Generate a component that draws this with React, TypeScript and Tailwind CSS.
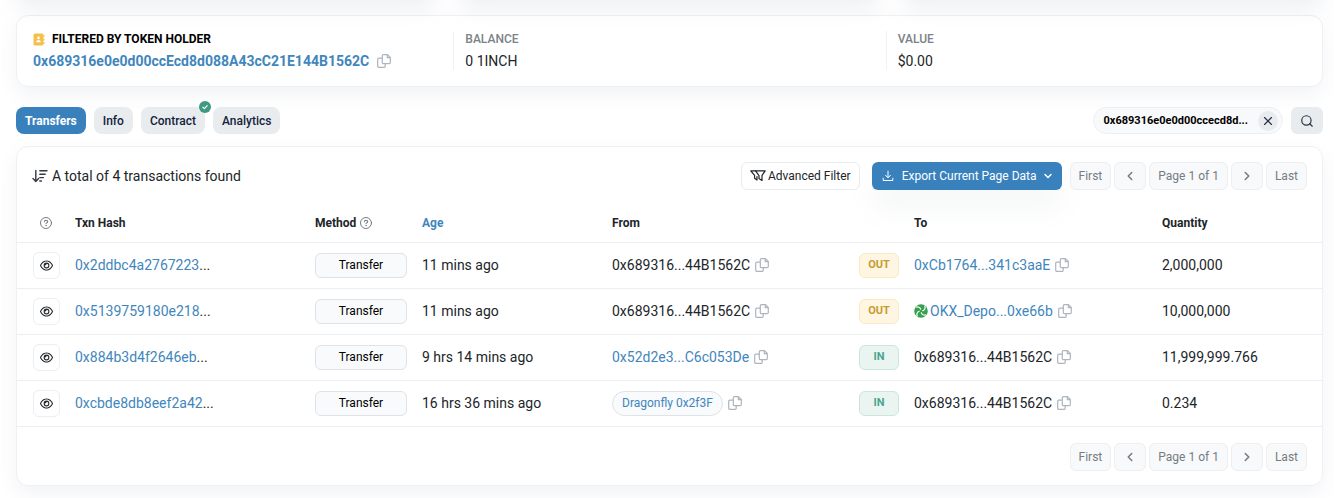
import type { ReactNode } from 'react';
import { clsx } from 'clsx';
import { ChevronDown, ChevronLeft, ChevronRight, Search, X } from 'lucide-react';
import { FaRegEye } from 'react-icons/fa6';

type Address = {
  label: string;
  link?: boolean;
  pill?: boolean;
  exchange?: boolean;
};

type Transfer = {
  hash: string;
  method: string;
  age: string;
  from: Address;
  direction: 'IN' | 'OUT';
  to: Address;
  quantity: string;
};

const HOLDER: Address = { label: '0x689316...44B1562C' };

const transfers: Transfer[] = [
  {
    hash: '0x2ddbc4a2767223',
    method: 'Transfer',
    age: '11 mins ago',
    from: HOLDER,
    direction: 'OUT',
    to: { label: '0xCb1764...341c3aaE', link: true },
    quantity: '2,000,000',
  },
  {
    hash: '0x5139759180e218',
    method: 'Transfer',
    age: '11 mins ago',
    from: HOLDER,
    direction: 'OUT',
    to: { label: 'OKX_Depo...0xe66b', link: true, exchange: true },
    quantity: '10,000,000',
  },
  {
    hash: '0x884b3d4f2646eb',
    method: 'Transfer',
    age: '9 hrs 14 mins ago',
    from: { label: '0x52d2e3...C6c053De', link: true },
    direction: 'IN',
    to: HOLDER,
    quantity: '11,999,999.766',
  },
  {
    hash: '0xcbde8db8eef2a42',
    method: 'Transfer',
    age: '16 hrs 36 mins ago',
    from: { label: 'Dragonfly 0x2f3F', link: true, pill: true },
    direction: 'IN',
    to: HOLDER,
    quantity: '0.234',
  },
];

const tabs = ['Transfers', 'Info', 'Contract', 'Analytics'];

function CopyIcon() {
  return (
    <svg viewBox="0 0 14 14" className="size-3.5" fill="none" stroke="#adb5bd" strokeWidth="1.2" strokeLinejoin="round">
      <path d="M6.4.7h4.1l2.8 2.8v5a1.1 1.1 0 0 1-1.1 1.1H6.4a1.1 1.1 0 0 1-1.1-1.1V1.8A1.1 1.1 0 0 1 6.4.7Z" />
      <path d="M10.3.9v2.8h2.8" />
      <path d="M5.2 4.2H1.8A1.1 1.1 0 0 0 .7 5.3v6.9a1.1 1.1 0 0 0 1.1 1.1h5.3a1.1 1.1 0 0 0 1.1-1.1V9.7" />
    </svg>
  );
}

function CopyButton() {
  return (
    <button type="button" aria-label="Copy address" className="shrink-0">
      <CopyIcon />
    </button>
  );
}

function HelpIcon() {
  return (
    <svg viewBox="0 0 14 14" className="size-3 shrink-0" fill="none" stroke="#6c757d" strokeLinecap="round">
      <circle cx="7" cy="7" r="6.4" strokeWidth="1.1" />
      <path d="M5.2 5.5c0-1 .7-1.6 1.8-1.6s1.9.6 1.9 1.6c0 1.3-1.9 1.3-1.9 2.5" strokeWidth="1.2" />
      <circle cx="7" cy="10" r=".4" fill="#6c757d" strokeWidth=".7" />
    </svg>
  );
}

function SortIcon() {
  return (
    <svg viewBox="0 0 16 14" className="h-3.5 w-4" fill="none" stroke="#343a40" strokeWidth="1.4" strokeLinecap="round" strokeLinejoin="round">
      <path d="M3.8 1.5v10.8M1 9.6l2.8 2.8 2.8-2.8" />
      <path d="M7.8 1.8H15M7.8 5.2h5.4M7.8 8.6h3.6M7.8 12h1.6" />
    </svg>
  );
}

function FilterIcon() {
  return (
    <svg viewBox="0 0 16 14" className="h-3.5 w-4" fill="none" stroke="#212529" strokeWidth="1.2" strokeLinecap="round" strokeLinejoin="round">
      <path d="M5.6 1.8h9.6L12 6.4v5.2L9 9.4V6.6Z" />
      <path d="M5.6 1.8H.8l3.8 4.6v2.8L7 11V7.6" />
    </svg>
  );
}

function DownloadIcon() {
  return (
    <svg viewBox="0 0 12 12" className="size-3" fill="none" stroke="currentColor" strokeWidth="1" strokeLinecap="round" strokeLinejoin="round">
      <path d="M6 1.2v6.4M3.5 5.3 6 7.8l2.500-2.500M1.200 8.200v2.300h9.600V8.200" />
    </svg>
  );
}

function ContactIcon() {
  return (
    <svg viewBox="0 0 12 13" className="h-[13px] w-3">
      <rect x=".5" y=".5" width="10" height="12" rx="1.5" fill="#f3c14b" />
      <path d="M11 2v2M11 5.5v2M11 9v2" stroke="#f3c14b" strokeWidth="1" />
      <circle cx="5.5" cy="4.9" r="1.3" fill="#fff" />
      <path d="M3.2 9.3c0-1.400.9-2 1.900-2h.8c1 0 1.900.6 1.900 2Z" fill="#fff" />
    </svg>
  );
}

function ExchangeIcon() {
  return (
    <svg viewBox="0 0 14 14" className="size-3.5 shrink-0">
      <circle cx="7" cy="7" r="6.800" fill="#37a04e" />
      <g fill="none" stroke="#fff" strokeWidth="1.200">
        {[0, 90, 180, 270].map((angle) => (
          <path key={angle} d="M1.600 3.200C4 2.400 6.400 3.200 6.800 5.600" transform={`rotate(${angle} 7 7)`} />
        ))}
      </g>
    </svg>
  );
}

function VerifiedBadge() {
  return (
    <svg viewBox="0 0 12 12" className="absolute -top-1.5 -right-1.5 size-3">
      <circle cx="6" cy="6" r="6" fill="#3d9a80" />
      <path d="m3.900 6.200 1.500 1.400 2.800-2.900" fill="none" stroke="#fff" strokeWidth="1.200" strokeLinecap="round" strokeLinejoin="round" />
    </svg>
  );
}

function PageButton({ children, label }: { children: ReactNode; label?: string }) {
  return (
    <button
      type="button"
      aria-label={label}
      className="flex h-7 items-center justify-center rounded-md border border-[#eceef1] bg-[#f8f9fa] px-2 text-[#747c84]"
    >
      {children}
    </button>
  );
}

function Pagination() {
  return (
    <nav aria-label="Pagination" className="flex gap-[3px] text-xs">
      <PageButton>First</PageButton>
      <PageButton label="Previous page">
        <ChevronLeft className="size-3.5" strokeWidth={2.6} />
      </PageButton>
      <PageButton>Page 1 of 1</PageButton>
      <PageButton label="Next page">
        <ChevronRight className="size-3.5" strokeWidth={2.6} />
      </PageButton>
      <PageButton>Last</PageButton>
    </nav>
  );
}

function AddressCell({ address }: { address: Address }) {
  return (
    <div className="flex items-center gap-[5px]">
      <span className="flex items-center gap-0.5">
        {address.exchange && <ExchangeIcon />}
        {address.link ? (
          <a
            href="#"
            className={clsx(
              'text-[#3f86bd]',
              address.pill && 'flex h-[25px] items-center rounded-full border border-[#dfe3e7] bg-[#f8fafb] px-[9px] text-xs',
            )}
          >
            {address.label}
          </a>
        ) : (
          address.label
        )}
      </span>
      <CopyButton />
    </div>
  );
}

function Stat({ label, value }: { label: string; value: string }) {
  return (
    <div className="h-[39px] border-l border-[#eff1f3] pl-[11px]">
      <p className="text-xs leading-4 font-medium text-[#7b8288]">{label}</p>
      <p className="mt-1 leading-5">{value}</p>
    </div>
  );
}

function HolderCard() {
  return (
    <section className="grid h-[72px] grid-cols-3 rounded-xl border border-[#eef0f3] bg-white px-1 pt-[15px] shadow-[0_8px_20px_rgba(189,197,209,0.2)]">
      <div className="pl-3">
        <p className="flex items-center gap-[7px] text-xs leading-4 font-bold text-black">
          <ContactIcon />
          FILTERED BY TOKEN HOLDER
        </p>
        <div className="mt-1 flex items-center gap-2 leading-5">
          <a href="#" className="font-bold text-[#3f86bd]">
            0x689316e0e0d00ccEcd8d088A43cC21E144B1562C
          </a>
          <CopyButton />
        </div>
      </div>
      <Stat label="BALANCE" value="0 1INCH" />
      <Stat label="VALUE" value="$0.00" />
    </section>
  );
}

function TabBar() {
  return (
    <div className="mt-5 flex items-center justify-between">
      <div className="flex gap-2 text-xs font-medium">
        {tabs.map((tab, i) => (
          <button
            key={tab}
            type="button"
            className={clsx(
              'relative h-[27px] rounded-lg px-[9px]',
              i === 0 ? 'bg-[#3881bd] font-bold text-white' : 'bg-[#e9ecef] text-[#14233a]',
            )}
          >
            {tab}
            {tab === 'Contract' && <VerifiedBadge />}
          </button>
        ))}
      </div>
      <div className="flex gap-2">
        <div className="flex h-[27px] items-center gap-2.5 rounded-full border border-[#eceff2] bg-[#f8f9fa] pr-1 pl-2.5 text-[11px] font-bold text-black">
          <span>0x689316e0e0d00ccecd8d...</span>
          <button type="button" aria-label="Clear filter" className="flex size-5 items-center justify-center rounded-full bg-[#e9ecef]">
            <X className="size-3.5 text-[#283347]" />
          </button>
        </div>
        <button type="button" aria-label="Search" className="flex h-[27px] w-8 items-center justify-center rounded-md bg-[#e9ecef]">
          <Search className="size-3.5 text-[#283347]" />
        </button>
      </div>
    </div>
  );
}

function TransferTable() {
  return (
    <table className="w-full table-fixed text-left">
      <colgroup>
        <col className="w-[58px]" />
        <col className="w-60" />
        <col className="w-[107px]" />
        <col className="w-[190px]" />
        <col className="w-[247px]" />
        <col className="w-[55px]" />
        <col className="w-[248px]" />
        <col />
      </colgroup>
      <thead className="text-xs">
        <tr className="h-[37px] border-b border-[#eceef1] [&>th]:font-bold">
          <th className="pl-[23px]">
            <HelpIcon />
          </th>
          <th>Txn Hash</th>
          <th>
            <span className="flex items-center gap-1">
              Method <HelpIcon />
            </span>
          </th>
          <th>
            <a href="#" className="text-[#3f86bd]">Age</a>
          </th>
          <th>From</th>
          <th />
          <th>To</th>
          <th>Quantity</th>
        </tr>
      </thead>
      <tbody>
        {transfers.map((tx) => (
          <tr key={tx.hash} className="h-[46px] border-b border-[#eceef1]">
            <td className="pl-4">
              <button
                type="button"
                aria-label="Quick view"
                className="flex size-[27px] items-center justify-center rounded-md border border-[#eceef1]"
              >
                <FaRegEye className="size-[13px]" />
              </button>
            </td>
            <td>
              <a href="#" className="text-[#3f86bd]">{tx.hash}</a>...
            </td>
            <td>
              <span className="flex h-[25px] w-[92px] items-center justify-center rounded-md border border-[#dfe3e7] bg-[#f8fafb] text-xs text-black">
                {tx.method}
              </span>
            </td>
            <td>{tx.age}</td>
            <td>
              <AddressCell address={tx.from} />
            </td>
            <td>
              <span
                className={clsx(
                  'flex h-[25px] w-10 items-center justify-center rounded-md border text-[11px] font-bold',
                  tx.direction === 'OUT'
                    ? 'border-[#fbe9c0] bg-[#fef5e3] text-[#c79c2e]'
                    : 'border-[#cde5df] bg-[#eaf5f2] text-[#4aa58c]',
                )}
              >
                {tx.direction}
              </span>
            </td>
            <td>
              <AddressCell address={tx.to} />
            </td>
            <td>{tx.quantity}</td>
          </tr>
        ))}
      </tbody>
    </table>
  );
}

export default function App() {
  return (
    <main className="min-h-screen overflow-hidden bg-white pr-[11px] pb-3 pl-4 font-[Roboto,sans-serif] text-sm text-[#212529]">
      {/* bottom edge of the overview cards */}
      <div className="-mt-16 mb-[15px] grid grid-cols-3 gap-6">
        <div className="h-16 rounded-xl shadow-[0_8px_20px_rgba(189,197,209,0.25)]" />
        <div className="h-16 rounded-xl shadow-[0_8px_20px_rgba(189,197,209,0.25)]" />
        <div className="h-16 rounded-xl shadow-[0_8px_20px_rgba(189,197,209,0.25)]" />
      </div>

      <HolderCard />
      <TabBar />

      <section className="mt-3 rounded-xl border border-[#eef0f3] bg-white shadow-[0_8px_20px_rgba(189,197,209,0.2)]">
        <div className="flex items-center justify-between px-[15px] pt-[15px] pb-[15px]">
          <p className="flex items-center gap-1">
            <SortIcon />
            A total of 4 transactions found
          </p>
          <div className="flex items-center text-xs">
            <button type="button" className="mr-3 flex h-7 items-center gap-0.5 rounded-md border border-[#e9ecef] px-2">
              <FilterIcon />
              Advanced Filter
            </button>
            <button
              type="button"
              className="mr-2 flex h-7 items-center rounded-md bg-[#3881bd] pr-2 pl-2.5 text-white shadow-[0_20px_24px_rgba(140,152,164,0.08)]"
            >
              <DownloadIcon />
              <span className="mr-[5px] ml-2">Export Current Page Data</span>
              <ChevronDown className="size-3" strokeWidth={3} />
            </button>
            <Pagination />
          </div>
        </div>
        <TransferTable />
        <div className="flex justify-end px-[15px] pt-4 pb-[14px]">
          <Pagination />
        </div>
      </section>
    </main>
  );
}
